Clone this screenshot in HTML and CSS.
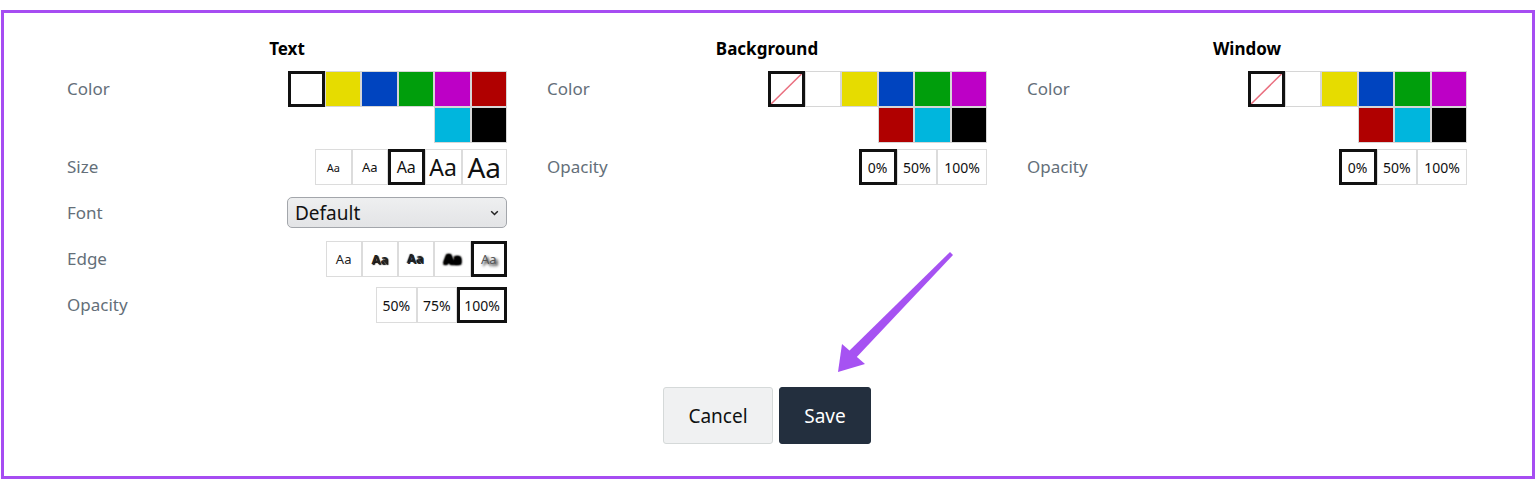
FILE: index.html
```html
<!DOCTYPE html>
<html lang="en">
<head>
  <meta charset="UTF-8" />
  <meta name="viewport" content="width=device-width, initial-scale=1" />
  <title>Subtitle Settings</title>
  <link rel="stylesheet" href="styles.css">
</head>
<body>
  <div class="frame">
    <div class="panels">
      <!-- Text -->
      <section class="group">
        <h3 class="group-title">Text</h3>
        <div class="row row-color">
          <span class="label">Color</span>
          <div class="swatches">
            <span class="swatch white selected"></span>
            <span class="swatch yellow"></span>
            <span class="swatch blue"></span>
            <span class="swatch green"></span>
            <span class="swatch magenta"></span>
            <span class="swatch red"></span>
            <span class="swatch cyan"></span>
            <span class="swatch black"></span>
          </div>
        </div>
        <div class="row row-size">
          <span class="label">Size</span>
          <div class="options">
            <span class="opt size s1">Aa</span>
            <span class="opt size s2">Aa</span>
            <span class="opt size s3 selected">Aa</span>
            <span class="opt size s4">Aa</span>
            <span class="opt size s5">Aa</span>
          </div>
        </div>
        <div class="row row-font">
          <span class="label label-font">Font</span>
          <div class="select">
            <span>Default</span>
            <svg width="9" height="6" viewBox="0 0 9 6"><path d="M1.2 1.2 L4.5 4.5 L7.8 1.2" fill="none" stroke="#222" stroke-width="1.5"/></svg>
          </div>
        </div>
        <div class="row row-edge">
          <span class="label">Edge</span>
          <div class="options">
            <span class="opt edge e-none">Aa</span>
            <span class="opt edge e-raised">Aa</span>
            <span class="opt edge e-depressed">Aa</span>
            <span class="opt edge e-uniform">Aa</span>
            <span class="opt edge e-shadow selected">Aa</span>
          </div>
        </div>
        <div class="row">
          <span class="label">Opacity</span>
          <div class="options">
            <span class="opt pct">50%</span>
            <span class="opt pct">75%</span>
            <span class="opt pct wide selected">100%</span>
          </div>
        </div>
      </section>

      <!-- Background -->
      <section class="group">
        <h3 class="group-title">Background</h3>
        <div class="row row-color">
          <span class="label">Color</span>
          <div class="swatches">
            <span class="swatch none selected"><svg viewBox="0 0 10 10" preserveAspectRatio="none"><line x1="0" y1="10" x2="10" y2="0" stroke="#ea6f7f" stroke-width="0.5"/></svg></span>
            <span class="swatch white"></span>
            <span class="swatch yellow"></span>
            <span class="swatch blue"></span>
            <span class="swatch green"></span>
            <span class="swatch magenta"></span>
            <span class="swatch red"></span>
            <span class="swatch cyan"></span>
            <span class="swatch black"></span>
          </div>
        </div>
        <div class="row row-size">
          <span class="label">Opacity</span>
          <div class="options">
            <span class="opt pct zero selected">0%</span>
            <span class="opt pct">50%</span>
            <span class="opt pct wide">100%</span>
          </div>
        </div>
      </section>

      <!-- Window -->
      <section class="group">
        <h3 class="group-title">Window</h3>
        <div class="row row-color">
          <span class="label">Color</span>
          <div class="swatches">
            <span class="swatch none selected"><svg viewBox="0 0 10 10" preserveAspectRatio="none"><line x1="0" y1="10" x2="10" y2="0" stroke="#ea6f7f" stroke-width="0.5"/></svg></span>
            <span class="swatch white"></span>
            <span class="swatch yellow"></span>
            <span class="swatch blue"></span>
            <span class="swatch green"></span>
            <span class="swatch magenta"></span>
            <span class="swatch red"></span>
            <span class="swatch cyan"></span>
            <span class="swatch black"></span>
          </div>
        </div>
        <div class="row row-size">
          <span class="label">Opacity</span>
          <div class="options">
            <span class="opt pct zero selected">0%</span>
            <span class="opt pct">50%</span>
            <span class="opt pct wide">100%</span>
          </div>
        </div>
      </section>
    </div>

    <div class="actions">
      <button class="btn btn-cancel">Cancel</button>
      <button class="btn btn-save">Save</button>
    </div>
  </div>

  <svg class="arrow" width="1536" height="481" viewBox="0 0 1536 481">
    <polygon points="950,252 953,255 853,361 846,354" fill="#a652f2"/>
    <polygon points="838,372 842,344 865,364" fill="#a652f2"/>
  </svg>
</body>
</html>
```

FILE: styles.css
```css
body {
  margin: 0;
  background: #fff;
  font-family: "Noto Sans", "Open Sans", sans-serif;
  color: #0f1111;
  position: relative;
  width: 1536px;
  height: 481px;
  overflow: hidden;
}

.frame {
  margin: 10px 1px 0 1px;
  height: 469px;
  box-sizing: border-box;
  border: 3px solid #a64df2;
  padding: 26px 0 0 63px;
}

.panels {
  display: flex;
  align-items: flex-start;
}

.group {
  width: 440px;
  margin-right: 40px;
}

.group-title {
  margin: 0 0 12px 0;
  font-size: 17px;
  line-height: 20px;
  font-weight: bold;
  text-align: center;
  color: #000;
}

.row {
  display: flex;
  justify-content: space-between;
  align-items: flex-start;
}

.row-color { margin-bottom: 6px; }
.row-size { margin-bottom: 12px; }
.row-font { margin-bottom: 13px; }
.row-edge { margin-bottom: 10px; }

.label {
  font-size: 17px;
  line-height: 36px;
  color: #646f79;
}

.label-font {
  line-height: 31px;
}

.swatches {
  width: 219px;
  display: flex;
  flex-wrap: wrap;
  justify-content: flex-end;
}

.swatch {
  width: 36.5px;
  height: 36px;
  box-sizing: border-box;
  border: 1px solid #d6d6d6;
}

.swatch svg {
  display: block;
  width: 100%;
  height: 100%;
}

.swatch.selected {
  border: 3px solid #111;
}

.white { background: #fff; }
.none { background: #fff; }
.yellow { background: #e6dc00; }
.blue { background: #0044bf; }
.green { background: #009e0c; }
.magenta { background: #bd00c6; }
.red { background: #b00000; }
.cyan { background: #00b6dd; }
.black { background: #000; }

.options {
  display: flex;
}

.opt {
  height: 36px;
  min-width: 36px;
  box-sizing: border-box;
  border: 1px solid #dcdcdc;
  display: flex;
  align-items: center;
  justify-content: center;
  color: #111;
}

.opt.selected {
  border: 3px solid #111;
}

.size { line-height: 1; width: 36.5px; }
.s1 { font-size: 11px; }
.s2 { font-size: 13px; }
.s3 { font-size: 16px; }
.s4 { font-size: 23px; width: 37px; }
.s5 { font-size: 28px; width: 45.5px; }

.edge {
  width: 36.3px;
  font-size: 13px;
  color: #222;
}

.e-raised {
  font-weight: bold;
  text-shadow: 1px 1px 1px #000;
}

.e-depressed {
  font-weight: bold;
  text-shadow: -1px -1px 1px #000;
}

.e-uniform {
  color: #000;
  font-weight: bold;
  text-shadow: 0 0 2px #000, 0 0 2px #000, 1px 1px 2px #000, -1px -1px 2px #000, 1px -1px 2px #000, -1px 1px 2px #000, 0 0 3px #000;
}

.e-shadow {
  color: #555;
  text-shadow: 2px 2px 3px #000;
}

.pct {
  width: 40.5px;
  font-size: 14px;
}

.pct.zero { width: 38px; }
.pct.wide { width: 50px; }

.select {
  width: 220px;
  height: 31px;
  box-sizing: border-box;
  border: 1px solid #a3a6ab;
  border-radius: 5px;
  background: linear-gradient(#eeeff0, #e3e4e6);
  display: flex;
  align-items: center;
  justify-content: space-between;
  padding: 0 7px 0 7px;
  font-size: 19px;
  color: #111;
}

.actions {
  display: flex;
  justify-content: center;
  gap: 6px;
  margin: 64px 0 0 -65px;
}

.btn {
  height: 57px;
  border-radius: 3px;
  font-family: "Noto Sans", "Open Sans", sans-serif;
  font-size: 19px;
  cursor: pointer;
}

.btn-cancel {
  width: 110px;
  background: #f0f1f2;
  border: 1px solid #d5d9d9;
  color: #0f1111;
}

.btn-save {
  width: 92px;
  background: #232f3e;
  border: 1px solid #232f3e;
  color: #fff;
}

.arrow {
  position: absolute;
  top: 0;
  left: 0;
  pointer-events: none;
}
```
